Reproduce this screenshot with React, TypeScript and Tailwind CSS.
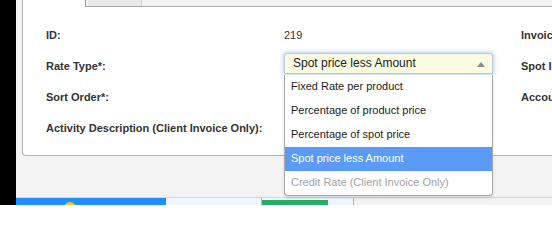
import React from "react";

// Rate edit form with the rate type dropdown open
const rows = [
  { label: "ID:", right: "Invoice Number:" },
  { label: "Rate Type*:", right: "Spot Index:" },
  { label: "Sort Order*:", right: "Account:" },
  { label: "Activity Description (Client Invoice Only):", right: "" },
];

const options = [
  { label: "Fixed Rate per product" },
  { label: "Percentage of product price" },
  { label: "Percentage of spot price" },
  { label: "Spot price less Amount", active: true },
  { label: "Credit Rate (Client Invoice Only)", disabled: true },
];

function RateSelect() {
  return (
    <div className="relative mb-[7px] w-[209px]">
      <div className="flex h-[21px] items-center justify-between rounded-t-[3px] border border-[#b9c6d6] bg-[#fbfbe2] pl-2 pr-[7px] text-[12px] text-[#222] shadow-[0_0_4px_1px_rgba(120,170,240,0.55)]">
        <span>Spot price less Amount</span>
        <svg width="8" height="5" viewBox="0 0 8 5" className="mb-[-2px]">
          <polygon points="4,0 8,5 0,5" fill="#8a8a8a" />
        </svg>
      </div>
      <ul className="absolute left-0 top-[22px] z-10 w-full overflow-hidden rounded-b-[4px] border border-t-0 border-[#a8a8a8] bg-white text-[11px] shadow-[0_2px_3px_rgba(0,0,0,0.12)]">
        {options.map((o) => (
          <li
            key={o.label}
            className={`flex h-6 items-center px-[6px] ${
              o.active
                ? "bg-[#5b9bf8] text-white"
                : o.disabled
                ? "text-[#a3a3a3]"
                : "text-[#222]"
            }`}
          >
            {o.label}
          </li>
        ))}
      </ul>
    </div>
  );
}

export default function App() {
  return (
    <div className="flex h-[205px] w-[552px] overflow-hidden bg-[#f3f3f3] font-['Liberation_Sans',Arial,sans-serif]">
      {/* left black edge */}
      <div className="w-4 shrink-0 bg-black" />

      <div className="flex min-w-0 flex-1 flex-col">
        {/* form panel */}
        <section className="ml-[6px] w-[600px] shrink-0 rounded-bl-[4px] border-b border-l border-[#b3b3b3] bg-white">
          {/* tab strip */}
          <div className="ml-[62px] flex h-[7px] border-b border-[#a9a9a9]">
            <div className="w-[57px] border-l border-r border-l-[#9d9d9d] border-r-[#d4d4d4] bg-[#e9e9e9] shadow-[inset_2px_0_0_#f4f4f4]" />
            <div className="flex-1 bg-[#f2f2f2]" />
          </div>

          {/* fields */}
          <div className="pb-[11px] pl-[23px] pt-[13px]">
            {rows.map((r, i) => (
              <div key={r.label} className="flex h-[31px] items-center text-[11px]">
                <div className="w-[238px] shrink-0 font-bold text-[#333]">
                  {r.label}
                </div>
                <div className="flex w-[237px] shrink-0 items-center">
                  {i === 0 && <span className="text-[#333]">219</span>}
                  {i === 1 && <RateSelect />}
                </div>
                <div className="whitespace-nowrap font-bold text-[#333]">
                  {r.right}
                </div>
              </div>
            ))}
          </div>
        </section>

        <div className="flex-1" />

        {/* bottom toolbar */}
        <div className="flex h-[8px] shrink-0 border-t border-[#d6d6d6]">
          <div className="relative w-[150px] bg-[#1e90ff]">
            <span className="absolute left-[48px] top-[4px] h-3 w-3 rounded-full bg-[#f5c518]" />
          </div>
          <div className="w-[95px] bg-[#eef6fd]" />
          <div className="flex w-[93px] border-l border-r border-l-[#b9b9b9] border-r-[#f5a623] bg-[#eef6fd]">
            <div className="mt-[2px] w-[66px] bg-[#28ad62]" />
          </div>
          <div className="flex-1 bg-[#f3f3f3]" />
        </div>
      </div>
    </div>
  );
}
